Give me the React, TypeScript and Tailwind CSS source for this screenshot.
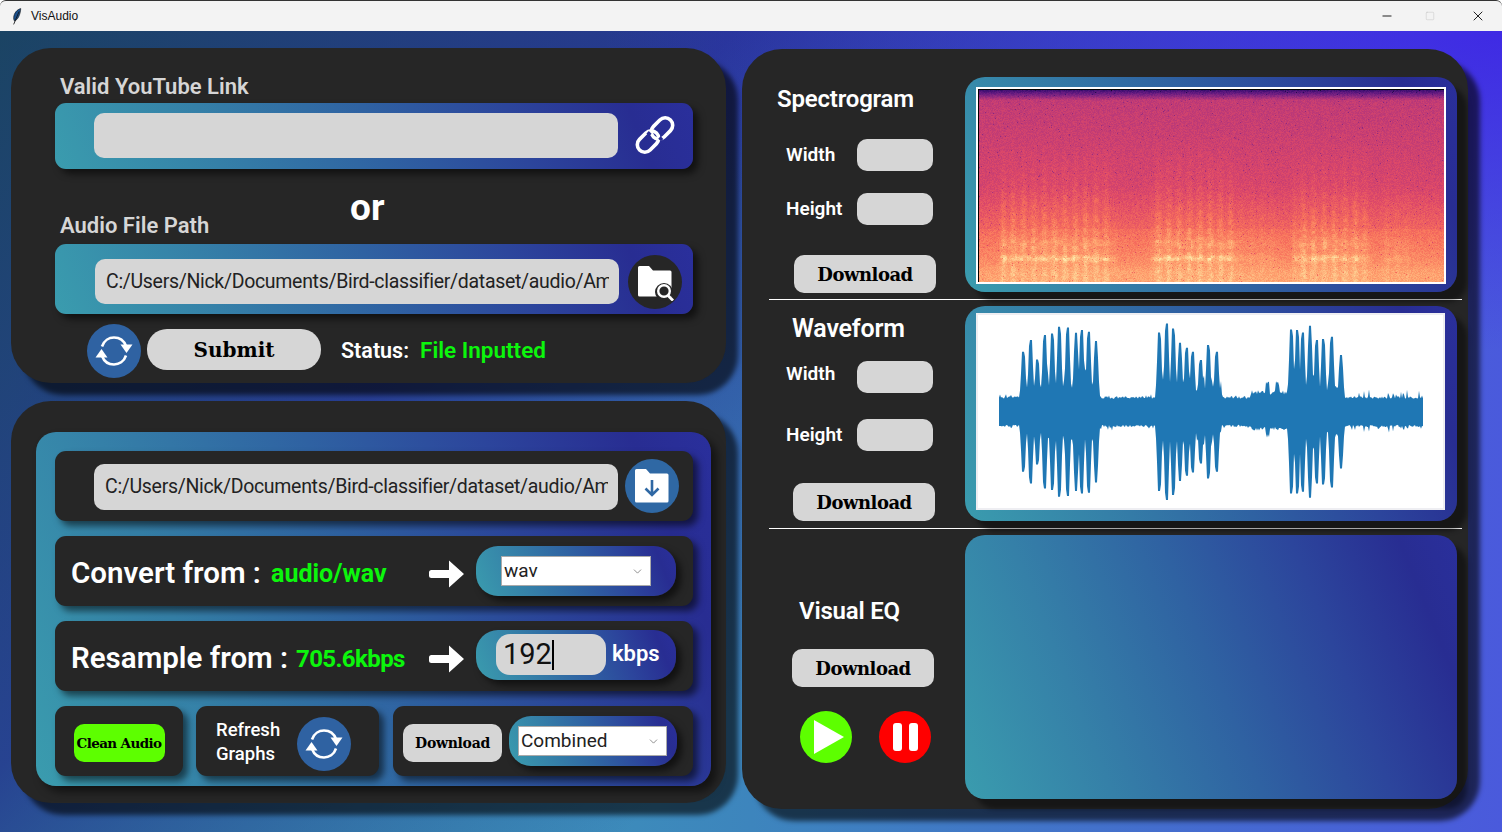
import { useEffect, useRef } from "react";
import { ChevronDown, Minus, Square, X } from "lucide-react";

const GRAD = "bg-[linear-gradient(68deg,#3a9cae_0%,#3580a8_25%,#2f62a2_50%,#2c459c_72%,#282d92_90%,#2a2f9c_100%)]";
const SHADOW = "shadow-[5px_5px_7px_rgba(0,0,0,0.55)]";
const CARD_SHADOW = "shadow-[10px_10px_5px_rgba(0,0,0,0.42)]";
const PANEL = "bg-[#262626] shadow-[12px_12px_5px_rgba(0,0,0,0.6)]";
const BODY = "font-['Roboto',sans-serif]";
const SLAB = "font-['DejaVu_Serif',serif] font-bold";
const GRAY_BOX = "bg-[#d6d6d6]";
const HEADING = "h-[32px] leading-[32px] text-[24px] font-semibold text-white tracking-[-0.2px]";

function mulberry(seed: number) {
  let a = seed;
  return () => {
    a |= 0;
    a = (a + 0x6d2b79f5) | 0;
    let t = Math.imul(a ^ (a >>> 15), 1 | a);
    t = (t + Math.imul(t ^ (t >>> 7), 61 | t)) ^ t;
    return ((t ^ (t >>> 14)) >>> 0) / 4294967296;
  };
}

const MAGMA = [
  [0, 0, 4],
  [20, 14, 54],
  [59, 15, 112],
  [100, 26, 128],
  [140, 41, 129],
  [183, 55, 121],
  [222, 73, 104],
  [247, 112, 92],
  [254, 159, 109],
  [254, 207, 146],
  [252, 253, 191],
];

function magma(v: number) {
  const c = Math.max(0, Math.min(0.999, v)) * 10;
  const i = Math.floor(c);
  const f = c - i;
  return MAGMA[i].map((k, n) => k + (MAGMA[i + 1][n] - k) * f);
}

function bump(v: number, c: number, s: number) {
  return Math.exp(-((v - c) * (v - c)) / (2 * s * s));
}

function Spectrogram() {
  const ref = useRef<HTMLCanvasElement>(null);
  useEffect(() => {
    const ctx = ref.current?.getContext("2d");
    if (!ctx) return;
    const W = 465;
    const H = 192;
    const rnd = mulberry(7);
    const img = ctx.createImageData(W, H);
    const bursts = [
      [0.05, 0.27, 1],
      [0.375, 0.53, 1],
      [0.54, 0.62, 0.3],
      [0.68, 0.82, 0.95],
      [0.87, 0.91, 0.35],
    ];
    const cells: number[] = [];
    for (let i = 0; i < 40000; i++) cells.push(rnd());
    for (let y = 0; y < H; y++) {
      const fy = y / H;
      for (let x = 0; x < W; x++) {
        const fx = x / W;
        let v = fy < 0.5 ? 0.52 + 0.12 * fy : 0.58 + (fy - 0.5) * 0.4;
        if (fy > 0.72) v += 0.02;
        if (fy < 0.05) v = 0.22 + (fy / 0.05) * 0.3;
        v += (rnd() - 0.5) * 0.07;
        if (rnd() < 0.01) v -= 0.12;
        v += 0.025 * bump(fy, 0.95, 0.03);
        for (const [a, b, k] of bursts) {
          if (fx > a - 0.01 && fx < b + 0.03) {
            const edge = Math.min(1, (fx - a + 0.01) / 0.012) * Math.min(1, (b + 0.03 - fx) / 0.03);
            const cell = cells[Math.floor(x / 4) * 97 + Math.floor(y / 3)];
            const stripe = 0.5 + 0.5 * Math.sin(x / 1.65);
            const rise = Math.min(1, Math.max(0, (fy - 0.24) / 0.45));
            v += edge * k * rise * 0.055 * stripe * (0.3 + cell);
            v += edge * k * 0.015 * rise;
            v += edge * k * 0.1 * bump(fy, 0.875, 0.013) * (0.5 + cell * 0.7);
            v += edge * k * 0.04 * bump(fy, 0.8, 0.02) * (0.4 + cell);
          }
        }
        const p = (y * W + x) * 4;
        const c = magma(v);
        img.data[p] = c[0];
        img.data[p + 1] = c[1];
        img.data[p + 2] = c[2];
        img.data[p + 3] = 255;
      }
    }
    ctx.putImageData(img, 0, 0);
  }, []);
  return <canvas ref={ref} width={465} height={192} className="block" />;
}

// spikes are [x in zoomed px, top, bottom] measured off the plot
const SPIKES = [
  [190, 155, 515], [212, 120, 550], [232, 178, 493], [254, 105, 565], [277, 100, 570], [298, 80, 590],
  [323, 82, 588], [348, 98, 573], [365, 90, 580], [386, 95, 578], [408, 123, 547],
  [598, 97, 573], [620, 70, 600], [640, 85, 585], [660, 128, 543], [680, 143, 527], [698, 155, 517],
  [722, 180, 490], [745, 135, 535], [770, 155, 515],
  [994, 88, 580], [1012, 90, 580], [1028, 97, 575], [1050, 77, 593], [1070, 120, 550], [1090, 117, 553],
  [1115, 110, 562], [1143, 165, 505],
];

function wavePath() {
  const rnd = mulberry(11);
  const top: string[] = [];
  const bot: string[] = [];
  for (let px = 0; px <= 424; px += 1) {
    const zx = 117 + px * 3;
    let up = 13 + rnd() * 2.5;
    let down = 13 + rnd() * 2.5;
    if (rnd() < 0.1) up += rnd() * 4;
    if (rnd() < 0.1) down += rnd() * 4;
    if ((zx > 185 && zx < 420) || (zx > 592 && zx < 785) || (zx > 988 && zx < 1150)) {
      up = 21 + rnd() * 5;
      down = 19 + rnd() * 4;
      if (rnd() < 0.2) up += rnd() * 18;
      if (rnd() < 0.2) down += rnd() * 14;
    }
    if (zx > 870 && zx < 988) {
      up = 17 + rnd() * 5 + (Math.abs(zx - 922) < 6 || Math.abs(zx - 952) < 6 ? 9 : 0);
      down = 15 + rnd() * 4 + (Math.abs(zx - 922) < 6 ? 7 : 0);
    }
    if (zx > 1150 && rnd() < 0.12) {
      up += 8 * rnd();
      down += 6 * rnd();
    }
    for (const [sx, t, b] of SPIKES) {
      const d = Math.abs(zx - sx) / 3;
      if (d < 7) {
        const k = d < 1.5 ? 1 : 1 - (d - 1.5) / 5.5;
        up = Math.max(up, ((335 - t) / 3) * k * k * k + 10 * (1 - k));
        down = Math.max(down, ((b - 335) / 3) * k * k * k + 10 * (1 - k));
      }
    }
    const x = 23 + px;
    top.push(`${x} ${(98.7 - up).toFixed(1)}`);
    bot.unshift(`${x} ${(98.7 + down).toFixed(1)}`);
  }
  return `M${top.join("L")}L${bot.join("L")}Z`;
}

function Waveform() {
  return (
    <div className="w-[469px] h-[197px] bg-white border-2 border-[#eeeef2]">
      <svg width="465" height="193" viewBox="2 2 465 193" className="block">
        <path d={wavePath()} fill="#1f77b4" />
      </svg>
    </div>
  );
}

function RefreshIcon() {
  return (
    <svg width="40" height="40" viewBox="0 0 40 40" fill="none">
      <path d="M8 15.5C10 9.5 15 6.5 20 6.5c5.5 0 10 3.2 12 8.5" stroke="#fff" strokeWidth="2.6" />
      <path d="M32 24.5C30 30.5 25 33.5 20 33.5c-5.5 0-10-3.2-12-8.5" stroke="#fff" strokeWidth="2.6" />
      <path d="M38.5 13.5 32.5 22 26.5 13.5Z" fill="#fff" />
      <path d="M1.5 26.5 7.5 18 13.5 26.5Z" fill="#fff" />
    </svg>
  );
}

function RefreshButton() {
  return (
    <div className="w-[54px] h-[54px] rounded-full bg-[#2f62a2] flex items-center justify-center shrink-0">
      <RefreshIcon />
    </div>
  );
}

function ChainIcon() {
  return (
    <svg width="40" height="40" viewBox="0 0 40 40" fill="none" className="shrink-0">
      <rect x="15" y="6" width="24" height="15" rx="7.5" transform="rotate(-45 27 13.5)" stroke="#fff" strokeWidth="3.6" />
      <rect x="1" y="19" width="24" height="15" rx="7.5" transform="rotate(-45 13 26.5)" stroke="#fff" strokeWidth="3.6" />
      <path d="M15.2 17.4 12.8 19.8M27 22.6l-2.4 2.4" stroke="#282d92" strokeWidth="3.8" />
    </svg>
  );
}

function FolderSearch() {
  return (
    <svg width="38" height="38" viewBox="0 0 38 38">
      <path d="M1 4.5A1.5 1.5 0 0 1 2.5 3H12l4 4.5h17A1.5 1.5 0 0 1 34.5 9v24.5H2.5A1.5 1.5 0 0 1 1 32Z" fill="#fff" />
      <circle cx="27" cy="29" r="9" fill="#262626" />
      <circle cx="27" cy="28" r="5.8" fill="none" stroke="#fff" strokeWidth="2.4" />
      <path d="m31 32.5 5 5" stroke="#fff" strokeWidth="2.8" />
    </svg>
  );
}

function FolderDown() {
  return (
    <svg width="36" height="38" viewBox="0 0 36 38">
      <path d="M1 3.5A1.5 1.5 0 0 1 2.5 2H12l4 4.5h17A1.5 1.5 0 0 1 34.5 8v26a1.5 1.5 0 0 1-1.5 1.5H2.5A1.5 1.5 0 0 1 1 34Z" fill="#fff" />
      <path d="M18 13v15M11.5 21.5 18 28l6.5-6.5" fill="none" stroke="#2f68a4" strokeWidth="2.6" />
    </svg>
  );
}

function BigArrow() {
  return (
    <svg width="36" height="30" viewBox="0 0 36 30" className="shrink-0 mt-[5px]">
      <path d="M2.5 11H20V1.5L35 15 20 28.5V19H2.5A2.5 2.5 0 0 1 0 16.5v-3A2.5 2.5 0 0 1 2.5 11Z" fill="#fff" />
    </svg>
  );
}

function Feather() {
  return (
    <svg width="10" height="17" viewBox="0 0 12 20">
      <path d="M10.5.5C6 1.5 2.5 6 2 11c-.2 2 .3 3.5 1 4.5C7 14 10 8 10.5.5Z" fill="#1a4f8c" stroke="#0b0b0b" strokeWidth=".7" />
      <path d="M8.5 4 2 19.5" stroke="#111" strokeWidth="1" />
    </svg>
  );
}

function GrayButton({ w, text, size }: { w: string; text: string; size: string }) {
  return (
    <div className={`${w} ${size} ${SLAB} ${GRAY_BOX} h-[38px] rounded-[10px] flex items-center justify-center text-black`}>
      {text}
    </div>
  );
}

function PathField({ className }: { className: string }) {
  return (
    <div className={`${className} ${GRAY_BOX} rounded-[10px] flex items-center pl-[11px]`}>
      <div className="w-[503px] overflow-hidden whitespace-nowrap text-[19.5px] text-[#222] tracking-[-0.31px]">
        C:/Users/Nick/Documents/Bird-classifier/dataset/audio/Am
      </div>
    </div>
  );
}

function SizeField({ label, lift }: { label: string; lift?: string }) {
  return (
    <div className="flex items-center">
      <span className={`w-[88px] pl-[17px] text-[19px] font-semibold text-white ${lift ?? ""}`}>{label}</span>
      <div className={`w-[76px] h-[32px] ${GRAY_BOX} rounded-[10px]`} />
    </div>
  );
}

function Select({ value, className, size }: { value: string; className: string; size: string }) {
  return (
    <div className={`${className} ${size} bg-white border border-[#aaa] h-[30px] flex items-center justify-between pl-[2px] pr-[6px] text-[#222]`}>
      <span>{value}</span>
      <ChevronDown size={13} strokeWidth={1.2} className="text-[#555]" />
    </div>
  );
}

export default function App() {
  return (
    <div className={`w-[1502px] h-[832px] overflow-hidden flex flex-col ${BODY}`}>
      <div className="h-[31px] bg-[#f3f3f3] border-t border-[#333] flex items-center shrink-0 rounded-t-[6px]">
        <div className="ml-[12px] mr-[9px] flex"><Feather /></div>
        <span className="text-[12px] text-[#111] font-['Liberation_Sans',sans-serif]">VisAudio</span>
        <div className="ml-auto flex items-center text-[#111]">
          <Minus size={14} strokeWidth={1.6} className="mr-[31px]" />
          <Square size={10} strokeWidth={1} className="text-[#bbb] mr-[35px]" />
          <X size={16} strokeWidth={1.4} className="mr-[16px]" />
        </div>
      </div>

      <div className="flex-1 flex pl-[11px] bg-[radial-gradient(ellipse_900px_320px_at_100%_0%,rgba(60,30,230,0.8)_0%,rgba(60,30,230,0)_100%),linear-gradient(135deg,rgba(15,30,70,0.72)_0%,rgba(30,20,130,0.68)_32%,rgba(30,20,130,0)_62%),linear-gradient(to_right,#3aa6b0_0%,#3d85bd_50%,#4a5adc_100%)]">
        <div className="w-[715px] pt-[17px] flex flex-col gap-[18px] shrink-0">
          <section className={`${PANEL} h-[335px] rounded-[40px] pt-[26px] pl-[44px] flex flex-col`}>
            <label className="ml-[5px] h-[26px] leading-[26px] text-[22px] font-semibold text-[#d6d6d6]">Valid YouTube Link</label>
            <div className={`mt-[3px] w-[638px] h-[66px] ${GRAD} ${SHADOW} rounded-[11px] flex items-start pl-[39px] pt-[10px]`}>
              <div className={`w-[524px] h-[45px] ${GRAY_BOX} rounded-[10px]`} />
              <div className="ml-[17px] mt-[2px]"><ChainIcon /></div>
            </div>
            <div className="h-[75px] relative">
              <span className="absolute left-[295px] top-[14px] text-[37px] leading-[50px] font-bold text-white">or</span>
              <span className="absolute left-[5px] top-[44px] text-[22px] leading-[26px] font-semibold text-[#d6d6d6]">Audio File Path</span>
            </div>
            <div className={`w-[638px] h-[70px] ${GRAD} ${SHADOW} rounded-[11px] flex items-start pl-[40px] pt-[11px]`}>
              <PathField className="w-[524px] h-[45px] mt-[4px]" />
              <div className="ml-[9px] w-[54px] h-[54px] rounded-full bg-[#262626] flex items-center justify-center pl-[2px]">
                <FolderSearch />
              </div>
            </div>
            <div className="mt-[10px] ml-[32px] flex items-start">
              <RefreshButton />
              <div className={`ml-[6px] mt-[5px] w-[174px] h-[41px] rounded-[20px] ${GRAY_BOX} ${SLAB} text-[20px] text-black flex items-center justify-center`}>Submit</div>
              <span className="ml-[20px] mt-[11px] text-[21.5px] font-semibold text-white">Status:</span>
              <span className="ml-[11px] mt-[10px] text-[22.5px] font-semibold text-[#0cf60c]">File Inputted</span>
            </div>
          </section>

          <section className={`${PANEL} h-[402px] rounded-[40px] pt-[31px] pl-[25px]`}>
            <div className={`${GRAD} w-[675px] h-[354px] rounded-[20px] pt-[19px] pl-[19px] flex flex-col gap-[15px] shadow-[6px_6px_8px_rgba(0,0,0,0.5)]`}>
              <div className={`w-[638px] h-[70px] bg-[#262626] ${SHADOW} rounded-[11px] flex items-start pl-[39px] pt-[8px]`}>
                <PathField className="w-[524px] h-[46px] mt-[5px]" />
                <div className="ml-[7px] w-[54px] h-[54px] rounded-full bg-[#2f68a4] flex items-center justify-center">
                  <FolderDown />
                </div>
              </div>
              <div className={`w-[638px] h-[70px] bg-[#262626] ${SHADOW} rounded-[11px] flex items-center pl-[16px]`}>
                <span className="w-[200px] mt-[5px] text-[29.5px] font-semibold text-white whitespace-nowrap">Convert from :</span>
                <span className="w-[158px] mt-[6px] text-[25px] font-bold text-[#0cf60c]">audio/wav</span>
                <BigArrow />
                <div className={`ml-[11px] w-[200px] h-[50px] rounded-[22px] ${GRAD} ${SHADOW} flex items-center pl-[25px]`}>
                  <Select value="wav" className="w-[150px]" size="text-[19px]" />
                </div>
              </div>
              <div className={`w-[638px] h-[70px] bg-[#262626] ${SHADOW} rounded-[11px] flex items-center pl-[16px]`}>
                <span className="w-[225px] mt-[5px] text-[29.5px] font-semibold text-white whitespace-nowrap">Resample from :</span>
                <span className="w-[133px] mt-[6px] text-[24px] font-bold text-[#0cf60c] tracking-[-0.6px]">705.6kbps</span>
                <BigArrow />
                <div className={`ml-[11px] mb-[2px] w-[200px] h-[50px] rounded-[22px] ${GRAD} ${SHADOW} flex items-start pl-[20px] pt-[4px]`}>
                  <div className={`w-[110px] h-[41px] ${GRAY_BOX} rounded-[14px] flex items-center pl-[7px] text-[29px] text-[#111]`}>
                    192<span className="w-[2px] h-[30px] bg-black" />
                  </div>
                  <span className="ml-[6px] mt-[3px] text-[22px] font-semibold text-white">kbps</span>
                </div>
              </div>
              <div className="flex">
                <div className={`w-[128px] h-[70px] bg-[#262626] ${SHADOW} rounded-[11px] flex items-start justify-center pt-[18px]`}>
                  <div className={`w-[91px] h-[38px] rounded-[10px] bg-[#5dff00] ${SLAB} text-[13.5px] tracking-[-0.6px] text-black flex items-center justify-center whitespace-nowrap`}>Clean Audio</div>
                </div>
                <div className={`ml-[13px] w-[183px] h-[70px] bg-[#262626] ${SHADOW} rounded-[11px] flex items-start pl-[20px] pt-[11px]`}>
                  <span className="w-[81px] mt-[1px] text-[18.5px] leading-[24px] font-medium text-white">Refresh<br />Graphs</span>
                  <RefreshButton />
                </div>
                <div className={`ml-[14px] w-[300px] h-[70px] bg-[#262626] ${SHADOW} rounded-[11px] flex items-start pl-[10px] pt-[10px]`}>
                  <GrayButton w="w-[99px] mt-[8px]" text="Download" size="text-[14px] tracking-[-0.3px]" />
                  <div className={`ml-[7px] w-[168px] h-[50px] rounded-[22px] ${GRAD} ${SHADOW} flex items-center pl-[9px]`}>
                    <Select value="Combined" className="w-[149px]" size="text-[19px]" />
                  </div>
                </div>
              </div>
            </div>
          </section>
        </div>

        <section className={`${PANEL} ml-[16px] mt-[18px] w-[726px] h-[760px] rounded-[40px] pl-[27px] flex flex-col`}>
          <div className="h-[251px] flex border-b border-white w-[693px] items-start">
            <div className="w-[196px] flex flex-col">
              <h2 className={`mt-[34px] ml-[8px] ${HEADING}`}>Spectrogram</h2>
              <div className="mt-[24px] flex flex-col gap-[22px]">
                <SizeField label="Width" />
                <SizeField label="Height" />
              </div>
              <GrayButton w="w-[142px] ml-[25px] mt-[30px]" text="Download" size="text-[18px] tracking-[-0.5px]" />
            </div>
            <div className={`mt-[28px] w-[492px] h-[215px] rounded-[20px] ${GRAD} ${CARD_SHADOW} pl-[11px] pt-[10px]`}>
              <div className="w-[470px] border-2 border-white"><div className="border-l border-t border-black"><Spectrogram /></div></div>
            </div>
          </div>

          <div className="h-[229px] flex border-b border-white w-[693px] items-start">
            <div className="w-[196px] flex flex-col">
              <h2 className={`mt-[13px] ml-[23px] ${HEADING} text-[25px]`}>Waveform</h2>
              <div className="mt-[16px] flex flex-col gap-[26px]">
                <SizeField label="Width" lift="-mt-[6px]" />
                <SizeField label="Height" />
              </div>
              <GrayButton w="w-[142px] ml-[24px] mt-[32px]" text="Download" size="text-[18px] tracking-[-0.5px]" />
            </div>
            <div className={`mt-[6px] w-[492px] h-[215px] rounded-[20px] ${GRAD} ${CARD_SHADOW} pl-[11px] pt-[7px]`}>
              <Waveform />
            </div>
          </div>

          <div className="flex items-start w-[693px]">
            <div className="w-[196px] flex flex-col">
              <h2 className={`mt-[66px] ml-[30px] ${HEADING}`}>Visual EQ</h2>
              <GrayButton w="w-[142px] ml-[23px] mt-[22px]" text="Download" size="text-[18px] tracking-[-0.5px]" />
              <div className="mt-[24px] ml-[31px] flex gap-[27px]">
                <div className="w-[52px] h-[52px] rounded-full bg-[#5dff00] flex items-center justify-center">
                  <svg width="34" height="36" viewBox="0 0 34 36" className="ml-[5px]"><path d="M2 1v34l30-17Z" fill="#fff" /></svg>
                </div>
                <div className="w-[52px] h-[52px] rounded-full bg-[#ff0000] flex items-center justify-center gap-[7px]">
                  <span className="w-[9px] h-[28px] rounded-[3px] bg-white" />
                  <span className="w-[9px] h-[28px] rounded-[3px] bg-white" />
                </div>
              </div>
            </div>
            <div className={`mt-[6px] w-[492px] h-[264px] rounded-[20px] ${GRAD} ${CARD_SHADOW}`} />
          </div>
        </section>
      </div>
    </div>
  );
}
